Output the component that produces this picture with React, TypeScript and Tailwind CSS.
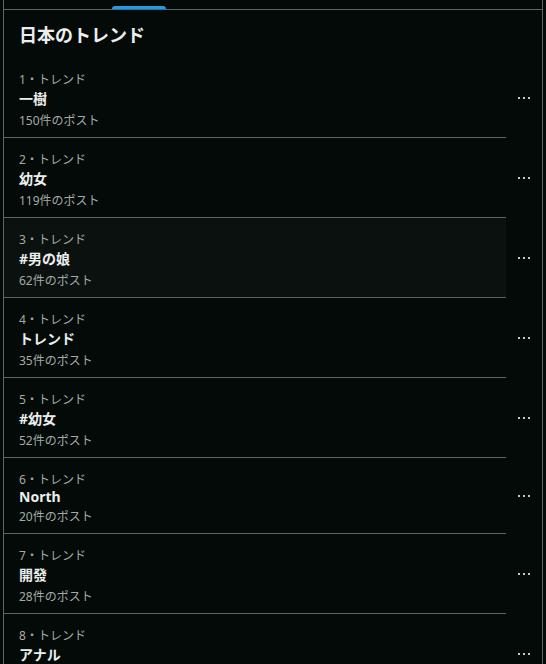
import React from 'react';

interface Trend {
  rank: number;
  title: string;
  posts: number;
}

const TRENDS: Trend[] = [
  { rank: 1, title: '一樹', posts: 150 },
  { rank: 2, title: '幼女', posts: 119 },
  { rank: 3, title: '#男の娘', posts: 62 },
  { rank: 4, title: 'トレンド', posts: 35 },
  { rank: 5, title: '#幼女', posts: 52 },
  { rank: 6, title: 'North', posts: 20 },
  { rank: 7, title: '開發', posts: 28 },
  { rank: 8, title: 'アナル', posts: 41 },
];

const HOVERED = 3;

function MoreIcon() {
  return (
    <svg width="14" height="4" viewBox="0 0 14 4" className="text-[#c4c8c6]">
      <rect x="1" y="1" width="2" height="2" fill="currentColor" />
      <rect x="6" y="1" width="2" height="2" fill="currentColor" />
      <rect x="11" y="1" width="2" height="2" fill="currentColor" />
    </svg>
  );
}

function TrendRow({ trend }: { trend: Trend }) {
  // latin-only titles get a shorter line box, as in the screenshot
  const cjk = /[^\x00-\x7F]/.test(trend.title);
  return (
    <div className="flex">
      <div
        className={`w-[502px] border-b border-[#5d6461] pl-[15px] pt-[13px] pb-[7px] ${
          trend.rank === HOVERED ? 'bg-[#0b110f]' : ''
        }`}
      >
        <div className="text-[12px] leading-[18px] text-[#a3aaa7]">{trend.rank}・トレンド</div>
        <div
          className={`text-[14px] font-bold text-[#eceeed] ${cjk ? 'leading-[20px]' : 'leading-[16px]'}`}
        >
          {trend.title}
        </div>
        <div className="mt-[3px] text-[12px] leading-[18px] text-[#a3aaa7]">{trend.posts}件のポスト</div>
      </div>
      <div className="flex w-[36px] items-center justify-center">
        <MoreIcon />
      </div>
    </div>
  );
}

export default function App() {
  return (
    <div
      className="h-screen overflow-hidden bg-[#030a08]"
      style={{ fontFamily: '"Noto Sans", "Noto Sans CJK JP", sans-serif' }}
    >
      <div className="ml-[3px] w-[540px] border-x border-[#5d6461]">
        <div className="flex h-[10px] items-end border-b border-[#5d6461] pl-[108px]">
          <div className="h-[3px] w-[54px] rounded-t-full bg-[#1d9bf0]" />
        </div>
        <h2 className="pl-[15px] pt-[12px] pb-[9px] text-[18px] font-bold leading-[27px] text-[#eceeed]">
          日本のトレンド
        </h2>
        {TRENDS.map(t => (
          <TrendRow key={t.rank} trend={t} />
        ))}
      </div>
    </div>
  );
}
